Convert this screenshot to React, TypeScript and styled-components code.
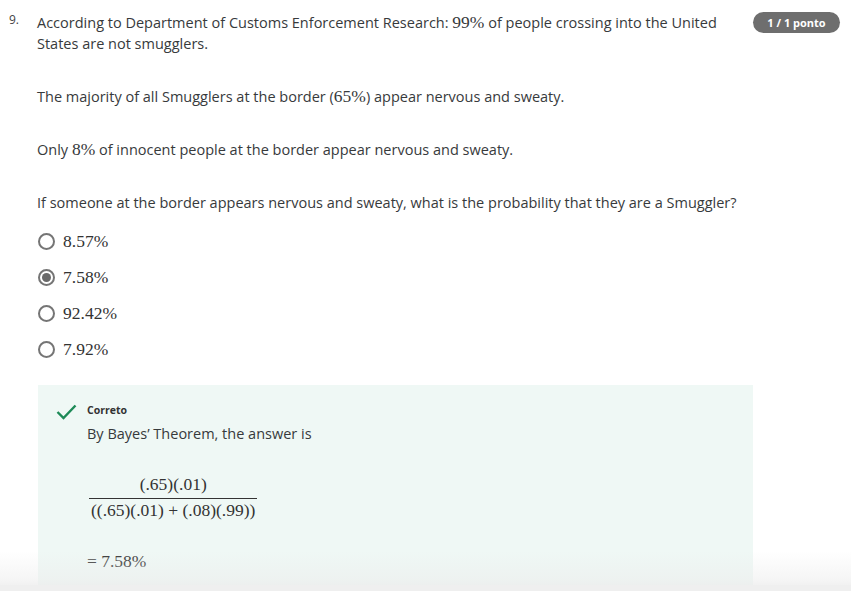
import React from "react";
import styled, { createGlobalStyle } from "styled-components";

const Global = createGlobalStyle`
  html, body { margin: 0; padding: 0; background: #ffffff; }
  body { font-family: "Open Sans", "Noto Sans", sans-serif; color: #373a3c; }
`;

const Page = styled.div`
  width: 851px;
  height: 591px;
  overflow: hidden;
  position: relative;
  box-sizing: border-box;
  padding: 12px 0 0 0;
`;

const QuestionRow = styled.div`
  display: flex;
  align-items: flex-start;
`;

const Num = styled.div`
  width: 28px;
  padding-left: 9px;
  box-sizing: border-box;
  font-size: 12px;
  line-height: 16px;
  color: #444;
  flex: none;
  margin-right: 9px;
`;

const Body = styled.div`
  width: 716px;
  flex: none;
`;

const Badge = styled.div`
  flex: none;
  width: 87px;
  height: 21px;
  border-radius: 11px;
  background: #6e6e6e;
  color: #fff;
  font-size: 11px;
  font-weight: 700;
  display: flex;
  align-items: center;
  justify-content: center;
`;

const Para = styled.p<{ $gap?: number }>`
  margin: 0 0 ${(p) => p.$gap ?? 32}px 0;
  font-size: 14.5px;
  line-height: 21px;
  &:nth-child(2) { margin-top: 1px; }
`;

const M = styled.span`
  font-family: "Liberation Serif", "DejaVu Serif", serif;
  font-size: 17.5px;
`;

const Options = styled.div`
  display: flex;
  flex-direction: column;
  gap: 14px;
  margin-top: 17px;
  margin-left: 1px;
`;

const Option = styled.label`
  display: flex;
  align-items: center;
  height: 22px;
  gap: 8px;
`;

const Radio = styled.span<{ $checked?: boolean }>`
  width: 17px;
  height: 17px;
  box-sizing: border-box;
  border: 2px solid #757575;
  border-radius: 50%;
  display: flex;
  align-items: center;
  justify-content: center;
  &::after {
    content: "";
    display: ${(p) => (p.$checked ? "block" : "none")};
    width: 9px;
    height: 9px;
    border-radius: 50%;
    background: #6a6a6a;
  }
`;

const OptText = styled.span`
  font-family: "Liberation Serif", "DejaVu Serif", serif;
  font-size: 17.5px;
  color: #333;
`;

const Feedback = styled.div`
  margin-top: 25px;
  width: 715px;
  height: 200px;
  margin-left: 1px;
  background: #eff8f5;
  box-sizing: border-box;
  padding: 17px 0 0 18px;
  display: flex;
  gap: 11px;
`;

const Check = styled.div`
  width: 20px;
  padding-top: 1px;
  flex: none;
`;

const FbBody = styled.div`
  display: flex;
  flex-direction: column;
`;

const Label = styled.div`
  font-size: 10.5px;
  font-weight: 700;
  line-height: 16px;
  color: #333;
`;

const FbText = styled.div`
  font-size: 14.5px;
  line-height: 21px;
  margin-top: 5px;
`;

const Frac = styled.div`
  display: inline-flex;
  flex-direction: column;
  align-items: center;
  align-self: flex-start;
  margin-top: 30px;
  margin-left: 2px;
  font-family: "Liberation Serif", "DejaVu Serif", serif;
  font-size: 17.5px;
  color: #333;
`;

const Numer = styled.div`
  padding: 0 1px 4px;
  line-height: 20px;
`;

const Denom = styled.div`
  border-top: 1px solid #333;
  padding: 1px 2px 0;
  line-height: 20px;
`;

const Result = styled.div`
  margin-top: 31px;
  font-family: "Liberation Serif", "DejaVu Serif", serif;
  font-size: 17.5px;
  color: #333;
  line-height: 20px;
`;

const Fade = styled.div`
  position: absolute;
  left: 0;
  right: 0;
  bottom: 0;
  height: 40px;
  pointer-events: none;
  background: linear-gradient(to bottom, rgba(240,240,240,0) 0%, rgba(236,236,236,0.5) 70%, rgba(236,236,236,0.95) 100%);
`;

const BottomStrip = styled.div`
  position: absolute;
  left: 0;
  right: 0;
  bottom: 0;
  height: 6px;
  background: #efefef;
`;

export default function App() {
  const opts = [
    { t: "8.57%", c: false },
    { t: "7.58%", c: true },
    { t: "92.42%", c: false },
    { t: "7.92%", c: false },
  ];
  return (
    <Page>
      <Global />
      <QuestionRow>
        <Num>9.</Num>
        <Body>
          <Para>
            According to Department of Customs Enforcement Research: <M>99%</M> of people crossing into the United States are not smugglers.
          </Para>
          <Para>
            The majority of all Smugglers at the border (<M>65%</M>) appear nervous and sweaty.
          </Para>
          <Para>
            Only <M>8%</M> of innocent people at the border appear nervous and sweaty.
          </Para>
          <Para $gap={0}>
            If someone at the border appears nervous and sweaty, what is the probability that they are a Smuggler?
          </Para>
          <Options>
            {opts.map((o) => (
              <Option key={o.t}>
                <Radio $checked={o.c} />
                <OptText>{o.t}</OptText>
              </Option>
            ))}
          </Options>
          <Feedback>
            <Check>
              <svg width="21" height="16" viewBox="0 0 21 16">
                <path d="M1.5 8 L7.5 14 L19.5 1.5" fill="none" stroke="#1d8a57" strokeWidth="2.4" />
              </svg>
            </Check>
            <FbBody>
              <Label>Correto</Label>
              <FbText>By Bayes’ Theorem, the answer is</FbText>
              <Frac>
                <Numer>(.65)(.01)</Numer>
                <Denom>((.65)(.01) + (.08)(.99))</Denom>
              </Frac>
              <Result>= 7.58%</Result>
            </FbBody>
          </Feedback>
        </Body>
        <Badge>1 / 1 ponto</Badge>
      </QuestionRow>
      <Fade />
      <BottomStrip />
    </Page>
  );
}
